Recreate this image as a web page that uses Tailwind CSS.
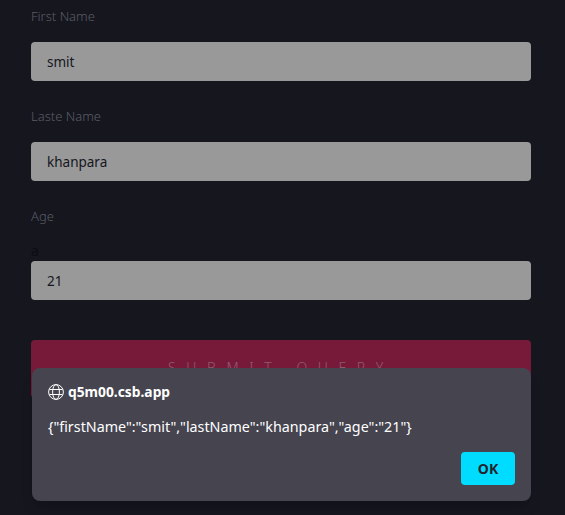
<!DOCTYPE html>
<html lang="en">

<head>
  <meta charset="UTF-8" />
  <meta name="viewport" content="width=device-width, initial-scale=1.0" />
  <script src="https://cdn.jsdelivr.net/npm/@tailwindcss/browser@4"></script>
  <title>Form</title>
</head>

<body class="relative h-[515px] w-[565px] overflow-hidden bg-[#15161e] font-['Noto_Sans',sans-serif]">
  <form class="flex w-[500px] flex-col pt-[6px] ml-[31px]">
    <label class="h-[20px] text-[13px] leading-[20px] font-light text-[#5a5c66]">First Name</label>
    <input type="text" value="smit"
      class="mt-[16px] h-[39px] w-full rounded bg-[#999999] px-4 text-[13.5px] text-[#15161e]" />

    <label class="mt-[25px] h-[20px] text-[13px] leading-[20px] font-light text-[#5a5c66]">Laste Name</label>
    <input type="text" value="khanpara"
      class="mt-[16px] h-[39px] w-full rounded bg-[#999999] px-4 text-[13.5px] text-[#15161e]" />

    <label class="mt-[25px] h-[20px] text-[13px] leading-[20px] font-light text-[#5a5c66]">Age</label>
    <span class="mt-[15px] h-[20px] text-[14px] leading-[20px] text-[#0c0d12]">a</span>
    <input type="text" value="21"
      class="h-[39px] w-full rounded bg-[#999999] px-4 text-[13.5px] text-[#15161e]" />

    <button type="button"
      class="mt-[40px] h-[58px] w-full rounded bg-[#771a3a] pb-[3px] text-[14px] font-light tracking-[10.6px] text-[#8f5a6e]">SUBMIT QUERY</button>
  </form>

  <!-- browser alert -->
  <div class="absolute top-[368px] left-[32px] flex h-[133px] w-[499px] flex-col rounded-lg bg-[#45444f] px-4 pt-[14px] shadow-lg">
    <div class="flex h-[20px] items-center gap-[4px] text-[13.8px] font-bold text-white">
      <svg xmlns="http://www.w3.org/2000/svg" viewBox="0 0 16 16" fill="none" stroke="currentColor" stroke-width="1"
        class="h-[16px] w-[16px]">
        <circle cx="8" cy="8" r="7.4" />
        <ellipse cx="8" cy="8" rx="3.4" ry="7.4" />
        <path d="M1.4 5.5h13.2M1.4 10.5h13.2" />
      </svg>
      q5m00.csb.app
    </div>
    <p class="mt-[15px] h-[20px] text-[14.3px] leading-[20px] text-white">{"firstName":"smit","lastName":"khanpara","age":"21"}</p>
    <div class="mt-[15px] flex justify-end">
      <button type="button" class="h-[33px] w-[54px] rounded bg-[#00dcff] text-[14px] font-bold text-[#23242c]">OK</button>
    </div>
  </div>
</body>

</html>
